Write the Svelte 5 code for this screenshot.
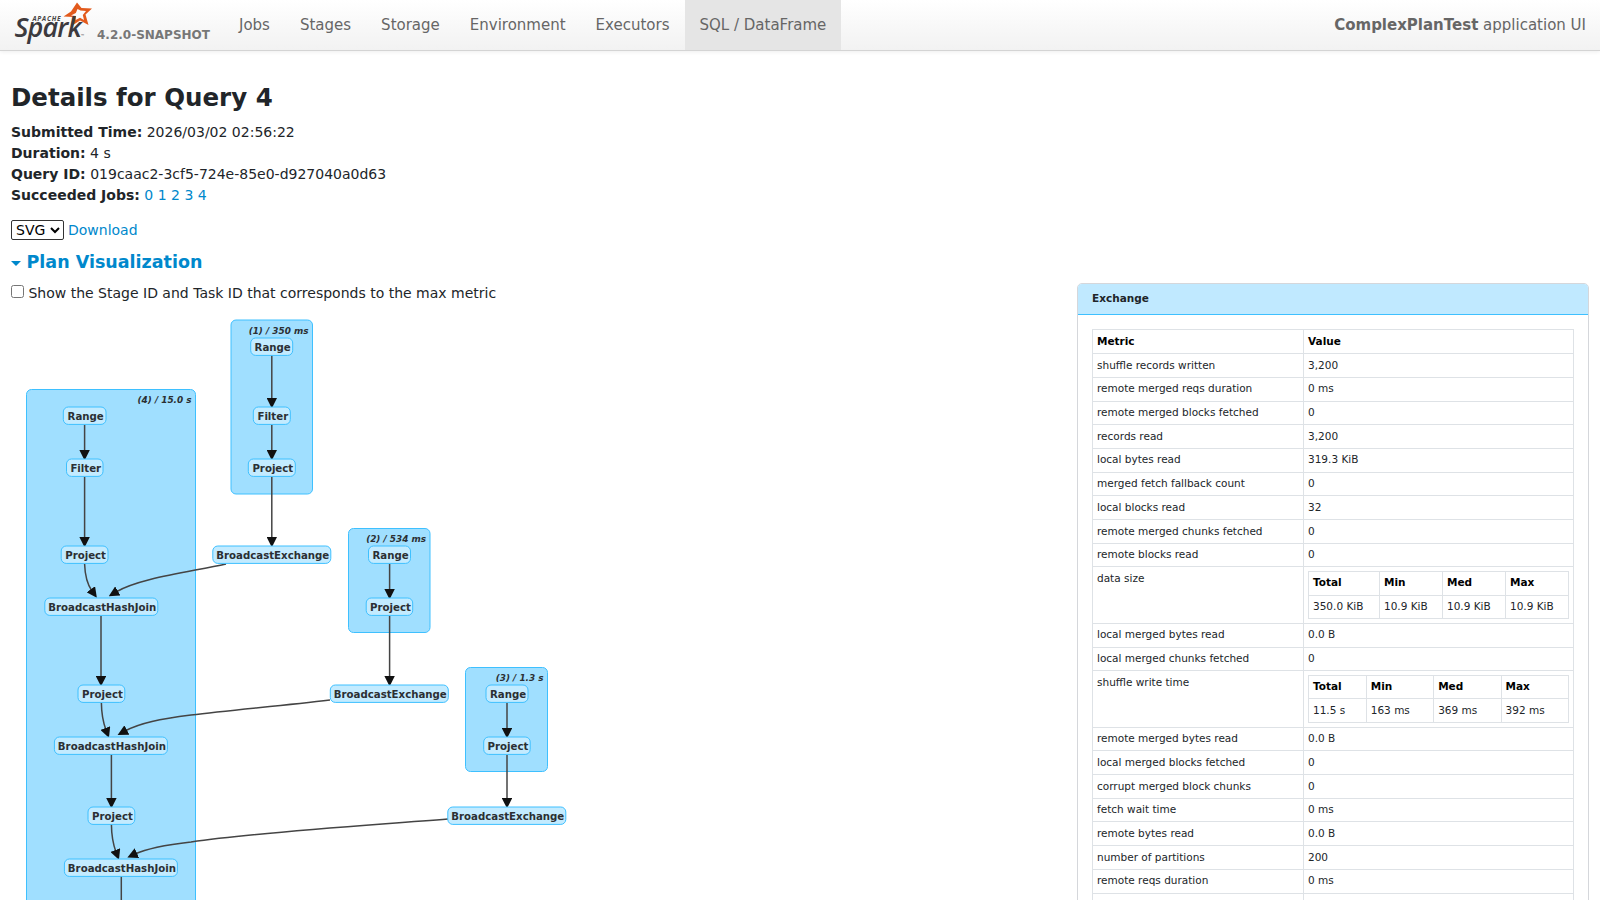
<script>
	const navLinks = ["Jobs", "Stages", "Storage", "Environment", "Executors", "SQL / DataFrame"];

	// plan graph, positions as dagre would lay them out
	const clusters = [
		{ x: 231, y: 320, w: 81.5, h: 174, label: "(1) / 350 ms" },
		{ x: 26.5, y: 389.5, w: 169, h: 520, label: "(4) / 15.0 s" },
		{ x: 348.5, y: 528.5, w: 81.5, h: 104, label: "(2) / 534 ms" },
		{ x: 465.5, y: 667.5, w: 82, h: 104, label: "(3) / 1.3 s" }
	];

	const nodes = [
		{ x: 250.7, y: 338, w: 42, name: "Range" },
		{ x: 253.3, y: 407, w: 37, name: "Filter" },
		{ x: 248.3, y: 459, w: 47, name: "Project" },
		{ x: 212.8, y: 546, w: 118, name: "BroadcastExchange" },
		{ x: 63.3, y: 407, w: 42.7, name: "Range" },
		{ x: 66.5, y: 459, w: 36.5, name: "Filter" },
		{ x: 61.2, y: 546, w: 46.8, name: "Project" },
		{ x: 44.8, y: 598, w: 113, name: "BroadcastHashJoin" },
		{ x: 78, y: 685, w: 46.8, name: "Project" },
		{ x: 54.4, y: 737, w: 113, name: "BroadcastHashJoin" },
		{ x: 88, y: 807, w: 46.8, name: "Project" },
		{ x: 64.4, y: 859, w: 113, name: "BroadcastHashJoin" },
		{ x: 368.5, y: 546, w: 42, name: "Range" },
		{ x: 366.2, y: 598, w: 46.5, name: "Project" },
		{ x: 330.3, y: 685, w: 118, name: "BroadcastExchange" },
		{ x: 486, y: 685, w: 42, name: "Range" },
		{ x: 483.7, y: 737, w: 46.5, name: "Project" },
		{ x: 447.8, y: 807, w: 118, name: "BroadcastExchange" }
	];

	const edges = [
		"M271.8 355V400",
		"M271.8 425V452",
		"M271.8 477V539",
		"M84.6 425V452",
		"M84.6 477V539",
		"M84.6 564C85 576 87 584 92 591",
		"M226 564C190 572 140 578 116 592",
		"M101 616V678",
		"M101.4 703C101.5 714 103 722 106 730",
		"M330 700C280 706 230 710 191 715C160 719 140 723 125 731",
		"M111.4 755V800",
		"M111.4 824C111.5 836 113 844 116 852",
		"M448 819C360 826 260 832 191 842C165 845 148 848 135 854",
		"M121.3 876V900",
		"M389.6 564V591",
		"M389.6 616V678",
		"M507 703V730",
		"M507 755V800"
	];

	const metrics = [
		["shuffle records written", "3,200"],
		["remote merged reqs duration", "0 ms"],
		["remote merged blocks fetched", "0"],
		["records read", "3,200"],
		["local bytes read", "319.3 KiB"],
		["merged fetch fallback count", "0"],
		["local blocks read", "32"],
		["remote merged chunks fetched", "0"],
		["remote blocks read", "0"],
		["data size", { total: "350.0 KiB", min: "10.9 KiB", med: "10.9 KiB", max: "10.9 KiB" }],
		["local merged bytes read", "0.0 B"],
		["local merged chunks fetched", "0"],
		["shuffle write time", { total: "11.5 s", min: "163 ms", med: "369 ms", max: "392 ms" }],
		["remote merged bytes read", "0.0 B"],
		["local merged blocks fetched", "0"],
		["corrupt merged block chunks", "0"],
		["fetch wait time", "0 ms"],
		["remote bytes read", "0.0 B"],
		["number of partitions", "200"],
		["remote reqs duration", "0 ms"],
		["", ""]
	];
</script>

<div class="page">
	<nav class="navbar">
		<a class="brand" href="#top">
			<svg class="logo" width="82" height="44" viewBox="0 0 82 44">
				<path fill="#e25a1c" fill-rule="evenodd" d="M66 2.5 70.5 8 81 8.5 74.5 14.5 77.5 25 69 20.5 62 25 62.5 17 52.5 16.5 60 11.5ZM66.5 9 64.8 13 60 15.5 65 16 64.7 20 69 17.8 73 20 71.8 15 75 11 69.5 10.5Z" />
				<text class="apache" x="21.5" y="20.5" textLength="28">APACHE</text>
				<text class="spark" x="3.5" y="37">Spark</text>
				<text class="tm" x="70" y="37">™</text>
			</svg>
			<span class="version">4.2.0-SNAPSHOT</span>
		</a>
		<ul class="nav-links">
			{#each navLinks as link}
				<li class:active={link === "SQL / DataFrame"}><a href="#top">{link}</a></li>
			{/each}
		</ul>
		<span class="app-name"><strong>ComplexPlanTest</strong> application UI</span>
	</nav>

	<main class="content">
		<h3>Details for Query 4</h3>
		<ul class="summary">
			<li><strong>Submitted Time:</strong> 2026/03/02 02:56:22</li>
			<li><strong>Duration:</strong> 4 s</li>
			<li><strong>Query ID:</strong> 019caac2-3cf5-724e-85e0-d927040a0d63</li>
			<li>
				<strong>Succeeded Jobs:</strong>
				<a href="#top">0</a>
				<a href="#top">1</a>
				<a href="#top">2</a>
				<a href="#top">3</a>
				<a href="#top">4</a>
			</li>
		</ul>

		<div class="download">
			<select><option>SVG</option></select>
			<a href="#top">Download</a>
		</div>

		<h4 class="plan-title"><span class="arrow"></span>Plan Visualization</h4>

		<div class="plan">
			<div class="plan-left">
				<label class="max-metric">
					<input type="checkbox" />
					Show the Stage ID and Task ID that corresponds to the max metric
				</label>

				<svg class="graph" width="600" height="600" viewBox="0 312 600 600">
					<defs>
						<marker id="head" viewBox="0 0 10 10" refX="2" refY="5" markerWidth="7" markerHeight="7" orient="auto">
							<path d="M0 0L10 5L0 10z" fill="#111" />
						</marker>
					</defs>
					{#each clusters as c}
						<rect class="cluster" x={c.x} y={c.y} width={c.w} height={c.h} rx="5" ry="5" />
						<text class="cluster-label" x={c.x + c.w - 4} y={c.y + 13.5}>{c.label}</text>
					{/each}
					{#each edges as d, i}
						<path class="edge" {d} marker-end={d.endsWith("900") ? null : "url(#head)"} />
					{/each}
					{#each nodes as n}
						<rect class="node" x={n.x} y={n.y} width={n.w} height="17.4" rx="5" ry="5" />
						<text class="node-label" x={n.x + n.w / 2 + 1} y={n.y + 12.6}>{n.name}</text>
					{/each}
				</svg>
			</div>

			<aside class="panel">
				<div class="panel-head">Exchange</div>
				<div class="panel-body">
					<table class="metrics">
						<thead>
							<tr><th class="metric-col">Metric</th><th>Value</th></tr>
						</thead>
						<tbody>
							{#each metrics as [name, value]}
								<tr>
									<td>{name}</td>
									<td class:nested={typeof value === "object"}>
										{#if typeof value === "object"}
											<table class="stats">
												<thead>
													<tr><th>Total</th><th>Min</th><th>Med</th><th>Max</th></tr>
												</thead>
												<tbody>
													<tr>
														<td>{value.total}</td>
														<td>{value.min}</td>
														<td>{value.med}</td>
														<td>{value.max}</td>
													</tr>
												</tbody>
											</table>
										{:else}
											{value}
										{/if}
									</td>
								</tr>
							{/each}
						</tbody>
					</table>
				</div>
			</aside>
		</div>
	</main>
</div>

<style>
	:global(body) {
		margin: 0;
		background: #fff;
		color: #212529;
		font-family: "DejaVu Sans", sans-serif;
		font-size: 14px;
		line-height: 1.5;
	}

	a {
		color: #0088cc;
		text-decoration: none;
	}

	.page {
		height: 100vh;
		overflow: hidden;
	}

	.navbar {
		display: flex;
		align-items: stretch;
		height: 50px;
		background: linear-gradient(to bottom, #ffffff, #f2f2f2);
		border-bottom: 1px solid #d4d4d4;
		box-shadow: 0 1px 4px rgba(0, 0, 0, 0.07);
	}

	.brand {
		display: flex;
		margin-left: 11px;
		width: 213px;
	}

	.logo {
		flex: none;
	}

	.apache {
		font-family: "Open Sans", sans-serif;
		font-size: 6.5px;
		font-weight: 700;
		font-style: italic;
		fill: #444;
	}

	.spark {
		font-family: "Open Sans", sans-serif;
		font-size: 27px;
		font-weight: 600;
		font-style: italic;
		letter-spacing: -0.9px;
		fill: #3c3a3e;
	}

	.tm {
		font-family: "Open Sans", sans-serif;
		font-size: 4px;
		fill: #555;
	}

	.version {
		color: #777;
		font-size: 12px;
		font-weight: 700;
		margin: 26px 0 0 4px;
		line-height: 18px;
		white-space: nowrap;
	}

	.nav-links {
		display: flex;
		list-style: none;
		margin: 0;
		padding: 0;
	}

	.nav-links a {
		display: block;
		height: 50px;
		padding: 0 15px;
		line-height: 50px;
		font-size: 15px;
		color: #666;
	}

	.nav-links .active {
		background: #e5e5e5;
	}

	.app-name {
		margin-left: auto;
		margin-right: 14px;
		line-height: 50px;
		font-size: 15px;
		color: #666;
	}

	.content {
		padding: 32px 11px 0;
	}

	h3 {
		margin: 0 0 10px;
		font-size: 24.5px;
		font-weight: 700;
		line-height: 1.2;
	}

	.summary {
		list-style: none;
		margin: 0 0 14px;
		padding: 0;
	}

	.download {
		display: flex;
		align-items: center;
		gap: 4px;
		height: 21px;
	}

	select {
		align-self: flex-start;
		font: 14px "DejaVu Sans", sans-serif;
		height: 20px;
		width: 53px;
		padding: 0;
		background: #fff;
		color: #000;
		border: 1px solid #333;
		border-radius: 2px;
	}

	.plan-title {
		margin: 8px 0 0;
		font-size: 17.5px;
		font-weight: 700;
		color: #0088cc;
		line-height: 27px;
	}

	.arrow {
		display: inline-block;
		border-left: 5px solid transparent;
		border-right: 5px solid transparent;
		border-top: 5px solid #0088cc;
		margin-right: 5.5px;
		vertical-align: middle;
	}

	.plan {
		display: flex;
		justify-content: space-between;
	}

	.plan-left {
		display: flex;
		flex-direction: column;
		align-items: flex-start;
	}

	.max-metric {
		display: block;
		margin-top: 7px;
	}

	.max-metric input {
		margin: 0;
	}

	.panel {
		box-sizing: border-box;
		width: 512px;
		margin-top: 7px;
		background: #fff;
		border: 1px solid #d5d7db;
		border-radius: 5px;
		font-size: 10.5px;
	}

	.panel-head {
		height: 30px;
		padding-left: 14px;
		line-height: 29px;
		font-weight: 700;
		background: #c0e9ff;
		border-bottom: 1px solid #3ec0ff;
		border-radius: 4px 4px 0 0;
	}

	.panel-body {
		padding: 14px 14px 0;
	}

	table {
		border-collapse: collapse;
		width: 100%;
	}

	th,
	td {
		border: 1px solid #dee2e6;
		padding: 3.5px 4px;
		line-height: 15.7px;
		text-align: left;
		vertical-align: top;
		color: #212529;
	}

	th {
		font-weight: 700;
		color: #000;
	}

	.metric-col {
		width: 202px;
	}

	.stats {
		font-size: 10.5px;
	}

	.stats th,
	.stats td {
		padding: 3.5px 4px;
	}

	.graph {
		flex: none;
		margin: 8px 0 0 -11px;
	}

	.cluster {
		fill: #a0dfff;
		stroke: #3ec0ff;
		stroke-width: 1px;
	}

	.node {
		fill: #c3ebff;
		stroke: #3ec0ff;
		stroke-width: 1px;
	}

	.edge {
		fill: none;
		stroke: #444;
		stroke-width: 1.5px;
	}

	.node-label {
		font-size: 10.2px;
		font-weight: 700;
		fill: #2b2f33;
		text-anchor: middle;
	}

	.cluster-label {
		font-size: 8.9px;
		font-weight: 700;
		font-style: italic;
		fill: #2b2f33;
		text-anchor: end;
	}
</style>
